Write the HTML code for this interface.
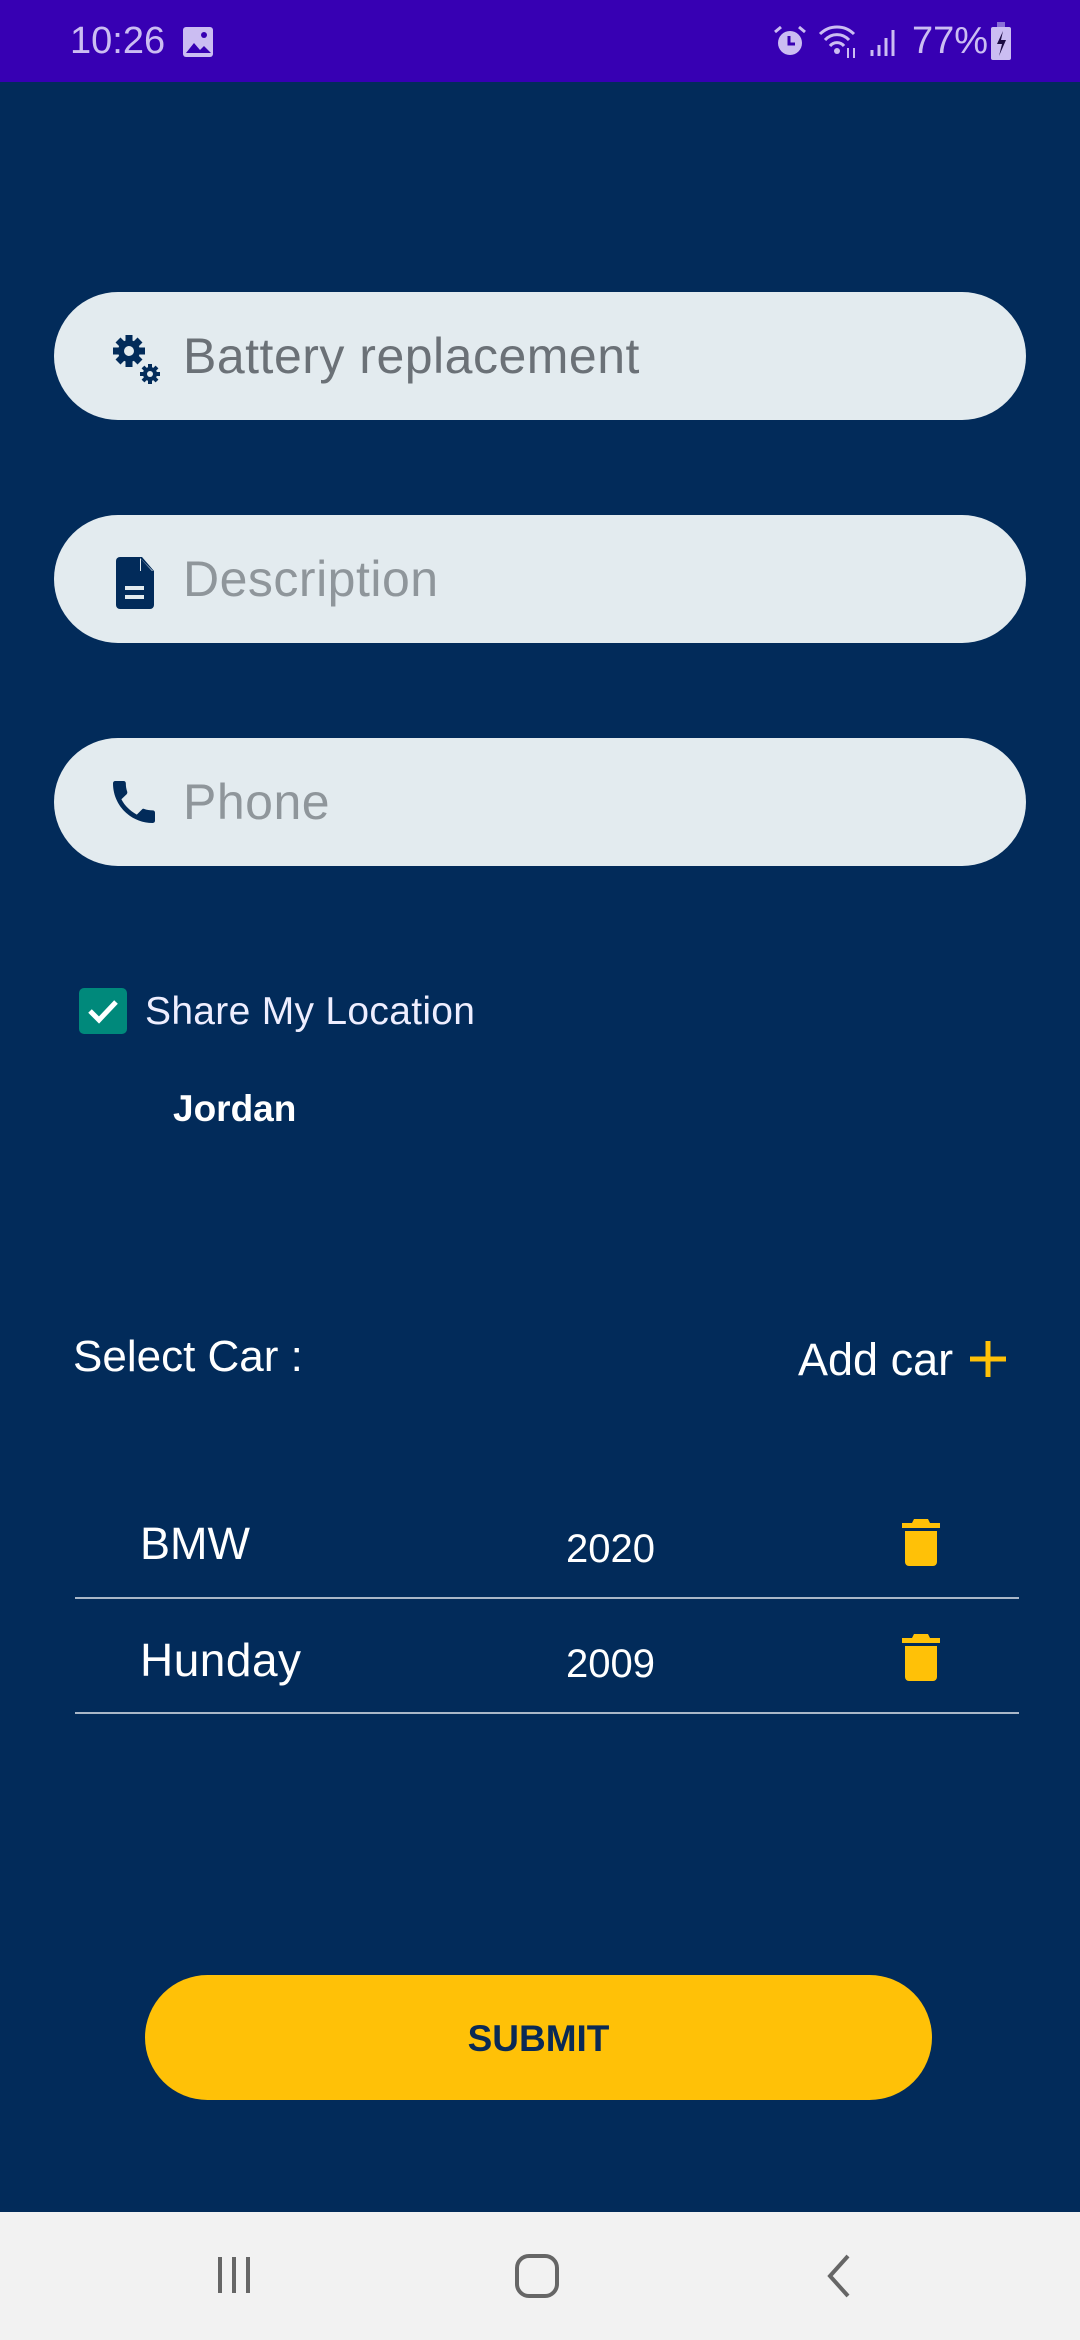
<!DOCTYPE html>
<html><head><meta charset="utf-8"><style>
*{margin:0;padding:0;box-sizing:border-box}
body{width:1080px;height:2340px;background:#022b5a;font-family:"Liberation Sans",Roboto,sans-serif;position:relative;overflow:hidden}
.a{position:absolute}
.sb{left:0;top:0;width:1080px;height:82px;background:#3700b3;color:#cbbdf2}
.field{left:54px;width:972px;height:128px;background:#e3ebef;border-radius:64px}
.field span{position:absolute;left:129px;top:0;line-height:128px;font-size:50px;color:#8f969b;letter-spacing:0.5px}
.field svg{position:absolute;left:54px;top:40px}
.w{color:#fff}
</style></head><body>
<div class="a sb">
 <div class="a" style="left:70px;top:18px;font-size:38px;line-height:46px">10:26</div>
 <svg class="a" style="left:182px;top:26px" width="32" height="32" viewBox="0 0 32 32"><rect x="1" y="1" width="30" height="30" rx="3" fill="#cbbdf2"/><path d="M4 27l8-10 6 7 4-4 7 7z" fill="#3700b3"/><circle cx="22" cy="9" r="3" fill="#3700b3"/></svg>
 <svg class="a" style="left:772px;top:24px" width="36" height="36" viewBox="0 0 36 36"><circle cx="18" cy="19" r="12" fill="#cbbdf2"/><path d="M17 12v8h6" stroke="#3700b3" stroke-width="3" fill="none"/><path d="M3 8l6-5M33 8l-6-5" stroke="#cbbdf2" stroke-width="3"/></svg>
 <svg class="a" style="left:818px;top:24px" width="42" height="36" viewBox="0 0 42 36"><path d="M2 10a24 24 0 0 1 34 0M7 16a16 16 0 0 1 24 0M12 22a9 9 0 0 1 14 0" stroke="#cbbdf2" stroke-width="3" fill="none"/><circle cx="19" cy="27" r="3" fill="#cbbdf2"/><path d="M30 24v10M36 34V24" stroke="#cbbdf2" stroke-width="2"/></svg>
 <svg class="a" style="left:868px;top:28px" width="30" height="30" viewBox="0 0 30 30"><path d="M4 28v-6M11 28v-11M18 28V10M25 28V2" stroke="#cbbdf2" stroke-width="3"/></svg>
 <div class="a" style="left:912px;top:18px;font-size:38px;line-height:46px">77%</div>
 <svg class="a" style="left:990px;top:22px" width="22" height="38" viewBox="0 0 22 38"><rect x="7" y="0" width="8" height="5" fill="#8a6fd6"/><rect x="1" y="5" width="20" height="33" rx="2" fill="#cbbdf2"/><path d="M13 9l-6 13h5l-3 12 7-16h-5z" fill="#1a0b40"/></svg>
</div>

<div class="a field" style="top:292px"><svg width="60" height="56" viewBox="0 0 60 56"><g fill="#022b5a"><circle cx="21" cy="19" r="11"/><g stroke="#022b5a" stroke-width="7"><path d="M21 3v32M5 19h32M10 8l22 22M32 8L10 30"/></g><circle cx="21" cy="19" r="5" fill="#e3ebef"/><circle cx="42" cy="42" r="7"/><g stroke="#022b5a" stroke-width="4"><path d="M42 32v20M32 42h20M35 35l14 14M49 35L35 49"/></g><circle cx="42" cy="42" r="3" fill="#e3ebef"/></g></svg><span style="color:#6b7177">Battery replacement</span></div>
<div class="a field" style="top:515px"><svg width="50" height="56" viewBox="0 0 50 56"><path d="M12 2h22l12 14v34a4 4 0 0 1-4 4H12a4 4 0 0 1-4-4V6a4 4 0 0 1 4-4z" fill="#022b5a"/><path d="M32 3v13h13" fill="#e3ebef"/><path d="M33 4l11 12H33z" fill="#022b5a"/><rect x="17" y="31" width="19" height="4" fill="#e3ebef"/><rect x="17" y="40" width="19" height="4" fill="#e3ebef"/></svg><span>Description</span></div>
<div class="a field" style="top:738px"><svg width="56" height="56" viewBox="0 0 24 24" style="left:52px;top:36px"><path fill="#022b5a" d="M6.6 10.8c1.4 2.8 3.8 5.1 6.6 6.6l2.2-2.2c.3-.3.7-.4 1-.2 1.1.4 2.3.6 3.6.6.6 0 1 .4 1 1V20c0 .6-.4 1-1 1-9.4 0-17-7.6-17-17 0-.6.4-1 1-1h3.5c.6 0 1 .4 1 1 0 1.3.2 2.5.6 3.6.1.3 0 .7-.2 1L6.6 10.8z"/></svg><span>Phone</span></div>

<div class="a" style="left:79px;top:988px;width:48px;height:46px;background:#00897b;border-radius:5px"></div>
<svg class="a" style="left:79px;top:988px" width="48" height="46" viewBox="0 0 48 46"><path d="M11 23l9 9 17-18" stroke="#fff" stroke-width="5" fill="none"/></svg>
<div class="a w" style="left:145px;top:989px;font-size:39px;line-height:46px;color:#eef;letter-spacing:0.3px">Share My Location</div>
<div class="a w" style="left:173px;top:1087px;font-size:37px;line-height:44px;font-weight:bold">Jordan</div>

<div class="a w" style="left:73px;top:1331px;font-size:44px;line-height:52px">Select Car :</div>
<div class="a w" style="left:798px;top:1334px;font-size:45px;line-height:52px">Add car</div>
<svg class="a" style="left:968px;top:1339px" width="40" height="40" viewBox="0 0 40 40"><path d="M20 2v36M2 20h36" stroke="#ffc107" stroke-width="5"/></svg>

<div class="a w" style="left:140px;top:1518px;font-size:45px;line-height:52px">BMW</div>
<div class="a w" style="left:566px;top:1526px;font-size:40px;line-height:46px">2020</div>
<svg class="a" style="left:902px;top:1517px" width="38" height="50" viewBox="0 0 38 50"><path d="M12 2h14l2 4h10v5H0V6h10z" fill="#ffc107"/><path d="M3 14h32v31a4 4 0 0 1-4 4H7a4 4 0 0 1-4-4z" fill="#ffc107"/></svg>
<div class="a" style="left:75px;top:1597px;width:944px;height:2px;background:#a9b7c8"></div>
<div class="a w" style="left:140px;top:1634px;font-size:46px;line-height:52px;letter-spacing:0.5px">Hunday</div>
<div class="a w" style="left:566px;top:1641px;font-size:40px;line-height:46px">2009</div>
<svg class="a" style="left:902px;top:1632px" width="38" height="50" viewBox="0 0 38 50"><path d="M12 2h14l2 4h10v5H0V6h10z" fill="#ffc107"/><path d="M3 14h32v31a4 4 0 0 1-4 4H7a4 4 0 0 1-4-4z" fill="#ffc107"/></svg>
<div class="a" style="left:75px;top:1712px;width:944px;height:2px;background:#a9b7c8"></div>

<div class="a" style="left:145px;top:1975px;width:787px;height:125px;background:#ffc107;border-radius:63px;text-align:center;line-height:128px;font-size:37px;font-weight:bold;color:#0a2a55">SUBMIT</div>

<div class="a" style="left:0;top:2212px;width:1080px;height:128px;background:#f2f2f2"></div>
<svg class="a" style="left:214px;top:2255px" width="40" height="40" viewBox="0 0 40 40"><path d="M6 2v36M20 2v36M34 2v36" stroke="#666" stroke-width="4"/></svg>
<svg class="a" style="left:514px;top:2253px" width="46" height="46" viewBox="0 0 46 46"><rect x="3" y="3" width="40" height="40" rx="12" stroke="#666" stroke-width="4" fill="none"/></svg>
<svg class="a" style="left:824px;top:2253px" width="30" height="46" viewBox="0 0 30 46"><path d="M24 3L6 23l18 20" stroke="#666" stroke-width="4" fill="none"/></svg>
</body></html>
